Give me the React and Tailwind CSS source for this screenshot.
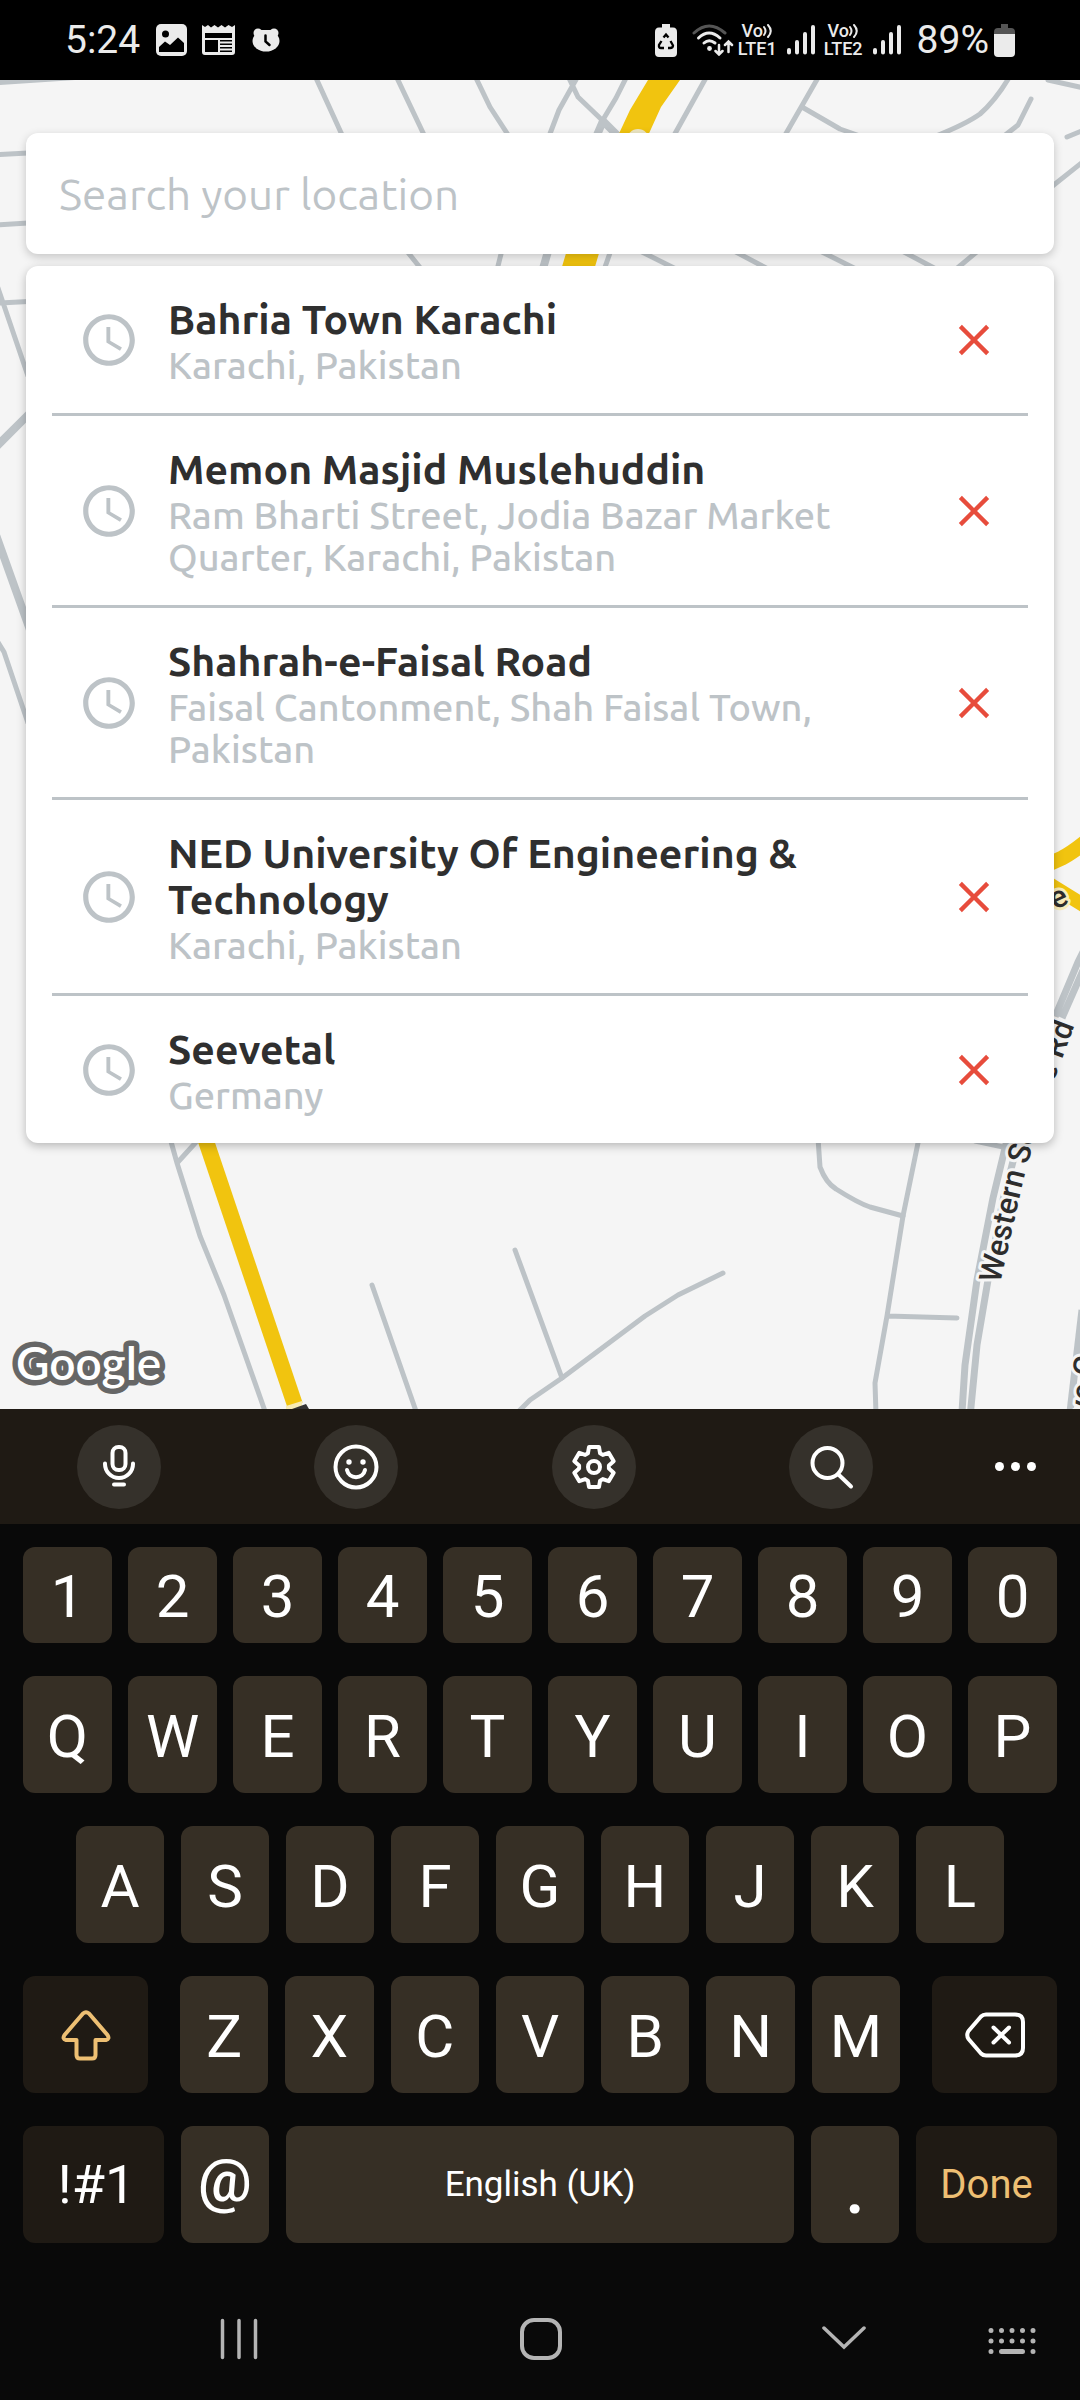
import { MdAccessTime, MdClose } from "react-icons/md";

const places = [
  { name: "Bahria Town Karachi", area: "Karachi, Pakistan" },
  {
    name: "Memon Masjid Muslehuddin",
    area: "Ram Bharti Street, Jodia Bazar Market Quarter, Karachi, Pakistan",
  },
  {
    name: "Shahrah-e-Faisal Road",
    area: "Faisal Cantonment, Shah Faisal Town, Pakistan",
  },
  {
    name: "NED University Of Engineering & Technology",
    area: "Karachi, Pakistan",
  },
  { name: "Seevetal", area: "Germany" },
];

/* ---------- status bar ---------- */

function Signal() {
  return (
    <svg width="28" height="30" viewBox="0 0 28 30" stroke="#ebebeb" strokeWidth="4" strokeLinecap="round" aria-hidden="true">
      <path d="M2 25V27.500M10 17V27.500M18 9V27.500M26 2V27.500" />
    </svg>
  );
}

function Lte({ n }) {
  return (
    <div className="flex flex-col items-center text-[18px] leading-[18px] font-medium">
      <div className="flex items-center">
        <span>Vo</span>
        <svg width="10" height="16" viewBox="0 0 10 16" fill="none" stroke="#ebebeb" strokeWidth="2" strokeLinecap="round" aria-hidden="true">
          <path d="M1 4Q4 8 1 12M5 2Q10.500 8 5 14" />
        </svg>
      </div>
      <span>{"LTE" + n}</span>
    </div>
  );
}

function StatusBar() {
  return (
    <header className="flex h-20 items-center justify-between bg-black pr-[65px] pl-[65px] text-[#ebebeb]">
      <div className="flex items-center">
        <span className="text-[39px] leading-none">5:24</span>
        <svg className="ml-4" width="31" height="32" viewBox="0 0 31 32" aria-hidden="true">
          <rect width="31" height="32" rx="5" fill="#ebebeb" />
          <circle cx="9.500" cy="10" r="3.500" fill="#000" />
          <path d="M3 23L9 17.500L14 21L22 13.500L28 19V28H3Z" fill="#000" />
        </svg>
        <svg className="ml-[15px]" width="33" height="30" viewBox="0 0 33 30" aria-hidden="true">
          <path d="M0 0L3 2L6 0L9 2.500L12.500 0L16 2.500L19.500 0L23 2.500L26.500 0L30 2L33 0V27Q33 30 30 30H3Q0 30 0 27Z" fill="#ebebeb" />
          <path d="M3 8H30V13H3ZM3 15H16V27H3ZM18 15H30V16.500H18ZM18 18.500H30V20H18ZM18 22H30V23.500H18ZM18 25.500H30V27H18Z" fill="#000" />
        </svg>
        <svg className="ml-[17px]" width="28" height="24" viewBox="0 0 28 24" aria-hidden="true">
          <g fill="#ebebeb">
            <circle cx="6" cy="5" r="4.500" />
            <circle cx="22" cy="5" r="4.500" />
            <ellipse cx="14" cy="13" rx="13.500" ry="10.500" />
            <rect x="6" y="2" width="16" height="6" />
          </g>
          <path d="M13.500 7.500V13.500L17.500 17" fill="none" stroke="#000" strokeWidth="2.500" strokeLinecap="round" />
        </svg>
      </div>
      <div className="flex items-center">
        <svg width="22" height="33" viewBox="0 0 22 33" aria-hidden="true">
          <path d="M7 0H15V3.500H18Q22 3.500 22 8V29Q22 33 18 33H4Q0 33 0 29V8Q0 3.500 4 3.500H7Z" fill="#ebebeb" />
          <path d="M8.500 13.500L11 10.500L13.500 13.500M15.500 17L18 21.500Q18 24 15 24H13M9 24H6Q3.500 24 4 21L6.500 17" fill="none" stroke="#000" strokeWidth="2.300" />
        </svg>
        <svg className="ml-[15px]" width="42" height="32" viewBox="0 0 42 32" fill="none" strokeLinecap="round" aria-hidden="true">
          <path d="M2 9Q17 -5 33 9" stroke="#555" strokeWidth="3" />
          <g stroke="#ebebeb" strokeWidth="3">
            <path d="M6.500 14Q17 4 28 14" />
            <path d="M12 19Q17 14.500 23 19" />
          </g>
          <circle cx="17.500" cy="24.500" r="2.400" fill="#ebebeb" />
          <path d="M27 21V30M23.500 27L27 30.500L30.500 27M36.500 28V18M33 21L36.500 17.500L40 21" stroke="#ebebeb" strokeWidth="2.500" />
        </svg>
        <div className="ml-1">
          <Lte n={1} />
        </div>
        <div className="ml-[10px]">
          <Signal />
        </div>
        <div className="ml-[9px]">
          <Lte n={2} />
        </div>
        <div className="ml-[10px]">
          <Signal />
        </div>
        <span className="ml-4 text-[39px] leading-none">89%</span>
        <svg className="ml-[5px]" width="21" height="33" viewBox="0 0 21 33" aria-hidden="true">
          <path d="M7 0H14V4H17Q21 4 21 8V12H0V8Q0 4 4 4H7Z" fill="#555" />
          <path d="M0 10H21V29Q21 33 17 33H4Q0 33 0 29Z" fill="#ebebeb" />
        </svg>
      </div>
    </header>
  );
}

/* ---------- map ---------- */

function MapCanvas() {
  return (
    <svg
      className="absolute inset-0 h-full w-full"
      viewBox="0 80 1080 1329"
      preserveAspectRatio="xMidYMid slice"
      fontFamily="Roboto, sans-serif"
      aria-hidden="true"
    >
      <rect y="80" width="1080" height="1329" fill="#f5f5f5" />
      <g fill="none" stroke="#bdc3c7" strokeWidth="5" strokeLinecap="round" strokeLinejoin="round">
        <path d="M316 78L343 137" />
        <path d="M397 78L426 139M476 78L490 107L512 141" />
        <path d="M-2 154.500L28 153M-2 225L28 223M0 303L28 301.500M-2 288L28 376" />
        <path d="M-4 639L4 652L28 723" />
        <path d="M406 250L422 270M502 250L497 270" />
        <path d="M568 76L578 97L602 120M578 76L559 110L548 139M627 76L616 98L604 118M707 76L672 139" />
        <path d="M819 76L784 137M802 107L840 129L860 136" />
        <path d="M1010 76Q996 100 980 114Q966 124 936 136" />
        <path d="M1031 99L1018 125L1004 136M1048 80L1084 88M1067 137L1084 130M1084 161L1050 188" />
        <path d="M611 250L604 270M640 251L676 269M734 251L768 269M820 251L856 269M902 251L936 269M979 250L955 270" />
        <path d="M170 1138L177 1163L200 1236L224 1295L266 1414M178 1162L198 1140" />
        <path d="M372 1285L417 1414M515 1250L562 1378" />
        <path d="M723 1273L678 1295L645 1316L562 1378L530 1400L518 1412" />
        <path d="M818 1138L820 1167Q826 1183 836 1189Q858 1203 870 1207L903 1216" />
        <path d="M919 1138L903 1216L887 1316L875 1383L876 1414M887 1316L957 1318" />
        <path d="M975 1141L1003 1147" />
      </g>
      <path d="M0 80H75L0 85Z" fill="#bdc3c7" />
      <g fill="none" stroke="#bdc3c7" strokeWidth="8" strokeLinejoin="round">
        <path d="M-4 447L30 413M-4 535L30 630" />
        <path d="M594 142L603 121L622 140M549 248L542 272" />
        <path strokeWidth="7" d="M1007 1140L993 1198L977 1280L965 1365L962 1412" />
        <path strokeWidth="7" d="M1016 1150L1003 1200L988 1280L977 1345L970.500 1412" />
        <path strokeWidth="7" d="M1084 950L1078 962L1052 1024M1084 968L1062 1018" />
        <path strokeWidth="7" d="M1082 1310L1070 1412" />
      </g>
      <g fill="none" stroke="#f1c40f">
        <path d="M1040 868L1062 858Q1072 853 1088 840" strokeWidth="15" />
        <path d="M1046 882L1088 908" strokeWidth="14" />
        <path d="M205 1138L295 1405" strokeWidth="16" />
      </g>
      <path d="M648 80H680L661 107L646 140H616L630 110ZM567 250H600L594 270H561Z" fill="#f1c40f" />
      <circle cx="638" cy="140" r="11" fill="#ece6c4" />
      <path d="M286 1406L302 1401V1409H286Z" fill="#f7ebb5" />
      <path d="M292 1409L306 1404L309 1409Z" fill="#333" />
      <path id="service-road" d="M1000 1284L1018 1204Q1032 1140 1056 1075L1084 1000" fill="none" />
      <path id="side-road" d="M1090 1424L1101 1310" fill="none" />
      <g fill="#2d2d2d" stroke="#f5f5f5" strokeWidth="6" strokeLinejoin="round" paintOrder="stroke" fontSize="31" fontWeight="500">
        <text>
          <textPath href="#service-road">Western Service Rd</textPath>
        </text>
        <text>
          <textPath href="#side-road">ive C</textPath>
        </text>
        <text x="1055" y="910" transform="rotate(-25 1055 910)" stroke="#f9edbb">e</text>
      </g>
    </svg>
  );
}

function GoogleMark() {
  return (
    <svg className="absolute bottom-2 left-2" width="164" height="66" viewBox="0 0 164 66" role="img" aria-label="Google">
      <text
        x="8"
        y="45"
        fontFamily="Lato, sans-serif"
        fontWeight="600"
        fontSize="46"
        fill="#fff"
        stroke="#666"
        strokeWidth="11"
        strokeLinejoin="round"
        paintOrder="stroke"
      >
        Google
      </text>
    </svg>
  );
}

function PlaceRow({ place }) {
  return (
    <li className="flex items-center border-b-3 border-[#bdc3c7] pt-7 pr-7 pb-[27px] pl-[26px] last:border-b-0">
      <MdAccessTime className="shrink-0 text-[62px] text-[#bdc3c7]" aria-hidden="true" />
      <div className="ml-7 min-w-0 flex-1 pt-0.5 pr-16">
        <h2 className="text-[41px] leading-[46px] font-semibold text-[#2f2f2f]">{place.name}</h2>
        <p className="mt-0.5 text-[38px] leading-[42px] font-medium text-[#bdc3c7]">{place.area}</p>
      </div>
      <button type="button" aria-label={"Remove " + place.name} className="shrink-0 text-[52px] text-[#e74c3c]">
        <MdClose />
      </button>
    </li>
  );
}

function LocationSearch() {
  return (
    <main className="relative flex-1 overflow-hidden px-[26px] pt-[53px] pb-[260px] font-['Ubuntu','Noto_Sans',sans-serif]">
      <MapCanvas />
      <GoogleMark />
      <div className="relative flex flex-col gap-3">
        <input
          type="text"
          aria-label="Search your location"
          placeholder="Search your location"
          className="h-[121px] w-full rounded-xl bg-white px-[33px] text-[44px] text-[#2f2f2f] shadow-[0_3px_10px_rgba(0,0,0,0.2)] outline-none placeholder:text-[#bdc3c7]"
        />
        <ul className="rounded-xl bg-white px-[26px] shadow-[0_3px_10px_rgba(0,0,0,0.25)]">
          {places.map((p) => (
            <PlaceRow key={p.name} place={p} />
          ))}
        </ul>
      </div>
    </main>
  );
}

/* ---------- keyboard ---------- */

const lineIcon = {
  width: 52,
  height: 52,
  viewBox: "-26 -26 52 52",
  fill: "none",
  stroke: "currentColor",
  strokeWidth: 4,
  strokeLinecap: "round",
  strokeLinejoin: "round",
  "aria-hidden": true,
};

const gearPoints = [0, 60, 120, 180, 240, 300]
  .flatMap((a) =>
    [
      [20.5, -14],
      [20.5, 14],
      [15, 24],
      [15, 36],
    ].map(([r, d]) => {
      const t = ((a + d - 90) * Math.PI) / 180;
      return (r * Math.cos(t)).toFixed(1) + "," + (r * Math.sin(t)).toFixed(1);
    })
  )
  .join(" ");

function Round({ label, children }) {
  return (
    <button type="button" aria-label={label} className="flex size-[84px] items-center justify-center rounded-full bg-[#35312b]">
      <svg {...lineIcon}>{children}</svg>
    </button>
  );
}

function Toolbar() {
  return (
    <div className="grid h-[115px] grid-cols-[237fr_238fr_237fr_206fr_85fr] items-center justify-items-start bg-[#1f1a14] pl-[77px] text-white">
      <Round label="Voice input">
        <rect x="-6.500" y="-20" width="13" height="23" rx="6" />
        <path d="M-14 -3.500V-3A14 14 0 0 0 14 -3V-3.500M-5 17.500H5" />
      </Round>
      <Round label="Emoji">
        <circle r="20.500" />
        <circle cx="-7" cy="-5" r="2.700" fill="currentColor" stroke="none" />
        <circle cx="7" cy="-5" r="2.700" fill="currentColor" stroke="none" />
        <path d="M-9 3A9.200 9.200 0 0 0 9 3" />
      </Round>
      <Round label="Settings">
        <polygon points={gearPoints} />
        <circle r="6" />
      </Round>
      <Round label="Search">
        <circle cx="-3.500" cy="-4" r="15" />
        <path d="M8 8L20 19.500" />
      </Round>
      <button type="button" aria-label="More" className="flex gap-[7px] py-4">
        <span className="size-[9px] rounded-full bg-white" />
        <span className="size-[9px] rounded-full bg-white" />
        <span className="size-[9px] rounded-full bg-white" />
      </button>
    </div>
  );
}

const keyBase = "flex min-w-0 items-center justify-center rounded-xl leading-none";
const letterKey = keyBase + " flex-1 bg-[#362f25] pt-1 text-[60px]";

function Keys({ chars, className }) {
  return (
    <div className={className}>
      {chars.split("").map((c) => (
        <button key={c} type="button" className={letterKey}>
          {c}
        </button>
      ))}
    </div>
  );
}

function Keyboard() {
  return (
    <section aria-label="Keyboard" className="bg-[#090909] text-white">
      <Toolbar />
      <div className="flex flex-col gap-[33px] px-[23px] pt-[23px] pb-[35px]">
        <Keys chars="1234567890" className="flex h-24 gap-4" />
        <Keys chars="QWERTYUIOP" className="flex h-[117px] gap-4" />
        <Keys chars="ASDFGHJKL" className="flex h-[117px] gap-[17px] px-[53px]" />
        <div className="flex h-[117px] gap-8">
          <button type="button" aria-label="Shift" className={keyBase + " flex-[125] bg-[#1f1a14] text-[#edbf73]"}>
            <svg {...lineIcon}>
              <path d="M-3 -21.500Q0 -24 3 -21.500L21.500 0Q24 4 20 5H9.500V20Q9.500 23.500 6 23.500H-6Q-9.500 23.500 -9.500 20V5H-20Q-24 4 -21.500 0Z" />
            </svg>
          </button>
          <Keys chars="ZXCVBNM" className="flex min-w-0 flex-[720] gap-[17px]" />
          <button type="button" aria-label="Backspace" className={keyBase + " flex-[125] bg-[#1f1a14]"}>
            <svg {...lineIcon} width={62} viewBox="-31 -26 62 52">
              <path d="M-9 -20.500H20Q28 -20.500 28 -13V13Q28 20.500 20 20.500H-9Q-12 20.500 -14 18.500L-26.500 4Q-29 0 -26.500 -4L-14 -18.500Q-12 -20.500 -9 -20.500Z" />
              <path d="M-1.500 -7.500L14 7.500M14 -7.500L-1.500 7.500" />
            </svg>
          </button>
        </div>
        <div className="flex h-[117px] gap-[17px]">
          <button type="button" className={keyBase + " flex-[141] bg-[#1f1a14] text-[54px]"}>
            <span className="pl-1.5">!#1</span>
          </button>
          <button type="button" className={keyBase + " flex-[88] bg-[#362f25] pb-2 text-[60px] font-medium"}>@</button>
          <button type="button" className={keyBase + " flex-[508] bg-[#362f25] text-[35px]"}>English (UK)</button>
          <button type="button" className={keyBase + " flex-[88] bg-[#362f25] pt-2 text-[72px] font-medium"}>.</button>
          <button type="button" className={keyBase + " flex-[141] bg-[#1f1a14] text-[40px] text-[#edbf73]"}>Done</button>
        </div>
      </div>
      <nav aria-label="System navigation" className="grid h-[122px] grid-cols-[302fr_302fr_168fr_92fr] items-center justify-items-start pl-[216px] text-[#b4b4b4]">
        <button type="button" aria-label="Recent apps">
          <svg width="46" height="46" viewBox="0 0 46 46" stroke="currentColor" strokeWidth="3.500" strokeLinecap="round">
            <path d="M6.500 4.500V41.500M23 4.500V41.500M39.500 4.500V41.500" />
          </svg>
        </button>
        <button type="button" aria-label="Home">
          <svg width="46" height="46" viewBox="0 0 46 46" fill="none" stroke="currentColor" strokeWidth="4">
            <rect x="4" y="4" width="38" height="38" rx="12" />
          </svg>
        </button>
        <button type="button" aria-label="Hide keyboard">
          <svg width="46" height="46" viewBox="0 0 46 46" fill="none" stroke="currentColor" strokeWidth="3.500" strokeLinecap="round">
            <path d="M4 12L24 31L44 12" />
          </svg>
        </button>
        <button type="button" aria-label="Switch keyboard">
          <svg width="48" height="46" viewBox="0 0 48 46" fill="none" stroke="currentColor" strokeWidth="5" strokeLinecap="round">
            <path d="M3 14.500h.01M13.500 14.500h.01M24 14.500h.01M34.500 14.500h.01M45 14.500h.01M3 25h.01M13.500 25h.01M24 25h.01M34.500 25h.01M45 25h.01M3 35.500h.01M13.500 35.500H34.500M45 35.500h.01" />
          </svg>
        </button>
      </nav>
    </section>
  );
}

export default function App() {
  return (
    <div className="flex min-h-screen flex-col bg-[#f5f5f5] font-[Roboto,sans-serif]">
      <StatusBar />
      <LocationSearch />
      <Keyboard />
    </div>
  );
}
